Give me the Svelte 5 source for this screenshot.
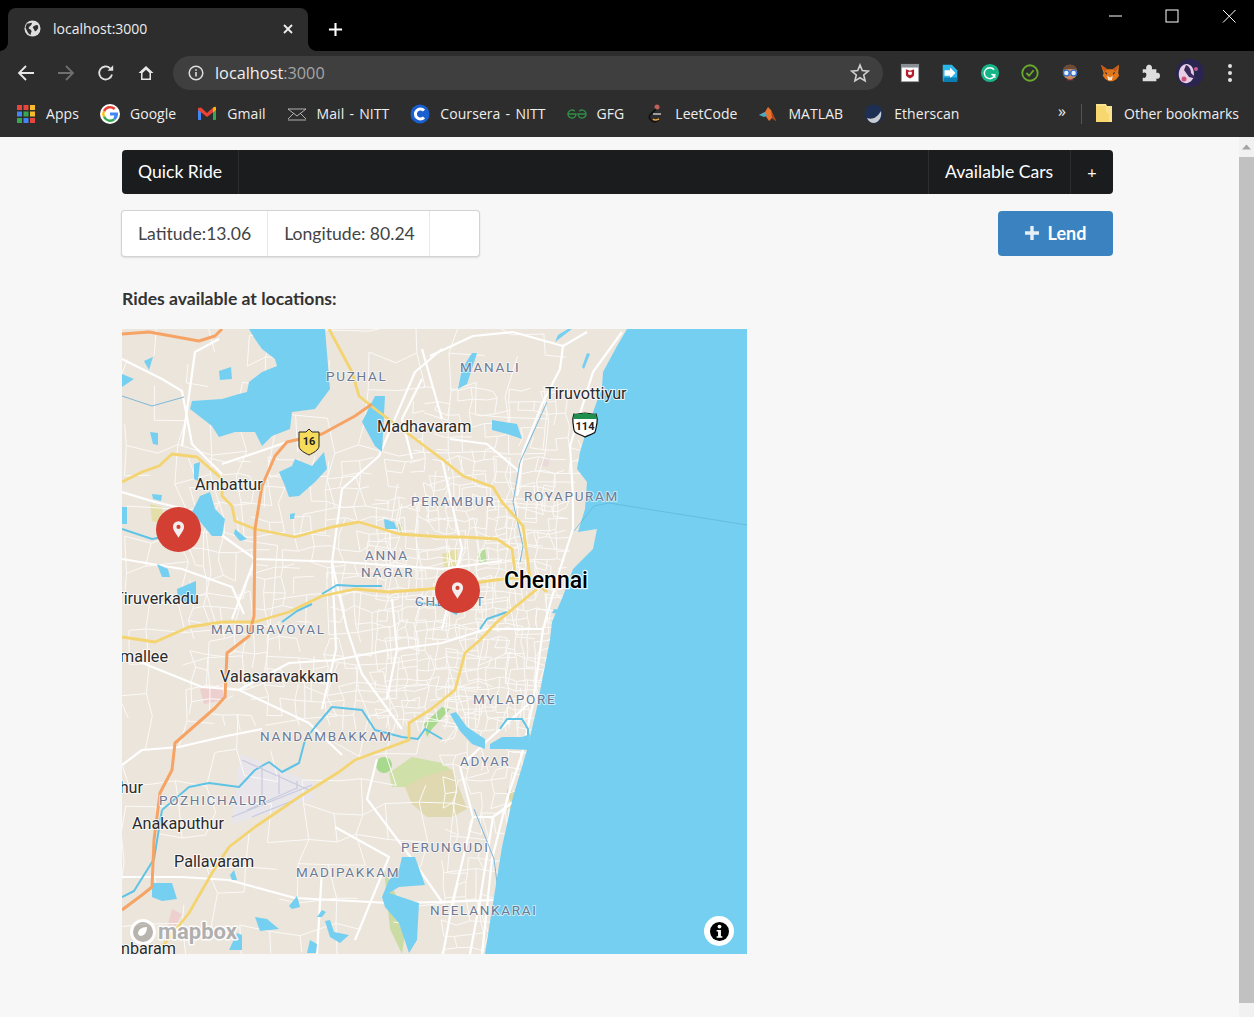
<script>
  const bookmarks = [
    { name: 'Apps', icon: 'apps' },
    { name: 'Google', icon: 'google' },
    { name: 'Gmail', icon: 'gmail' },
    { name: 'Mail - NITT', icon: 'mail' },
    { name: 'Coursera - NITT', icon: 'coursera' },
    { name: 'GFG', icon: 'gfg' },
    { name: 'LeetCode', icon: 'leet' },
    { name: 'MATLAB', icon: 'matlab' },
    { name: 'Etherscan', icon: 'ether' },
  ];

  const appColors = ['#e8453c', '#e8453c', '#f9bb2d', '#4285f4', '#34a853', '#f9bb2d', '#34a853', '#4285f4', '#e8453c'];

  // lakes and the sea, in map pixels
  const water = [
    '505,0 495,17 481,43 480,58 465,100 458,123 455,140 465,153 463,180 456,203 475,200 471,220 451,240 441,267 430,293 428,311 415,378 405,421 391,468 380,518 371,574 363,625 625,625 625,0',
    '127,0 203,0 208,60 193,80 170,83 168,100 150,107 140,117 133,103 113,103 97,108 90,97 68,80 70,72 100,70 117,65 125,63 127,53 140,43 155,37 153,30 140,20 133,10',
    '157,143 170,137 173,130 190,137 202,123 205,140 193,153 177,167 167,168 163,157',
    '78,167 88,163 93,180 103,190 100,207 90,207 70,183',
    '240,93 253,67 263,67 260,123 253,117',
    '0,45 12,50 0,58',
    '22,32 31,28 27,41',
    '97,42 109,38 110,50 98,51',
    '28,103 36,104 36,116 31,115',
    '72,135 78,133 76,152 72,150',
    '30,165 40,166 39,172 31,170',
    '0,178 5,178 5,195 0,195',
    '113,200 125,210 118,212 112,205',
    '35,235 46,240 48,248 40,248',
    '55,260 74,252 74,274 56,272',
    '168,185 173,184 172,190 168,190',
    '262,190 272,193 275,200 263,200',
    '433,13 450,0 446,0 436,6',
    '370,91 395,95 400,110 385,105 370,101',
    '468,25 465,24 460,38 462,40',
    '350,24 355,24 345,55 336,60 340,40',
    '280,528 293,528 303,556 277,558 267,564 297,574 295,611 287,624 277,594 263,578 260,568 267,551 277,541',
    '30,554 50,554 55,570 40,572 30,568',
    '133,588 145,590 157,600 138,602',
    '167,577 175,567 178,578 170,580',
    '195,588 200,581 204,583 200,588',
    '203,592 208,591 212,603 227,606 218,614 208,608',
    '185,624 188,611 195,615 194,624',
    '107,621 115,604 120,606 120,621',
    '108,546 112,541 115,551 110,551',
    '328,385 334,383 345,398 363,410 363,420 350,415 338,402',
    '368,415 380,408 400,408 408,405 407,421 385,420 368,420',
    '440,281 438,285 430,284 432,280',
  ];

  const yellow = [
    '207,0 230,43 237,67 253,80 320,130 341,147 371,158 380,173 401,197 406,233 408,250 425,263',
    '0,153 20,143 37,137 50,125 75,128 100,150 100,167 110,177 113,192 133,200 173,208 210,198 237,193 277,205 320,208 341,208 375,210 390,220 393,243',
    '0,308 33,313 67,298 100,293 133,293 167,283 200,267 233,260 267,263 308,260 381,250 408,248',
    '415,260 375,293 358,311 343,324 333,361 308,381 287,394 287,411 233,431 217,443 177,468 133,498 107,518 90,544 67,584 40,618',
  ];

  const orange = [
    '0,5 27,3 77,12 93,7 100,0',
    '250,75 233,87 200,105 165,113 153,127 140,157 133,200 132,287 127,307 105,324 103,368 93,379 53,414 50,441 38,464 32,511 30,558 20,566 0,581',
  ];

  const white = [
    '13,331 80,358 117,361 187,394 220,426',
    '117,361 167,334 213,331 267,321 320,314 365,300 420,300',
    '0,548 60,548 107,551 173,569 267,574 320,573 400,570',
    '0,436 20,421 57,418 100,408 140,400',
    '213,498 267,528 233,611',
    '411,371 366,411 338,438 351,488 331,571 321,625',
    '371,488 358,571 348,625',
    '320,20 293,43 257,127 220,160 210,233 214,320 200,380',
    '308,27 351,7 391,3 441,17 465,3',
    '441,17 438,40 421,73 401,123 395,167',
    '500,3 471,43 448,117 451,167 451,200 438,240 421,300 411,374 400,425 385,470 370,530 360,625',
    '328,110 365,115 398,143',
    '0,163 33,173 63,180 133,230 220,233 320,240 380,232',
    '133,230 110,290',
    '60,117 73,23 97,10',
    '0,30 40,50 60,62 70,115 100,145',
    '0,230 60,240 110,258 122,285',
    '210,233 225,300 240,345 280,400',
    '320,130 340,220 320,300',
    '165,113 130,125 100,135',
    '320,90 300,20',
    '255,430 245,470 290,530 320,573',
    '265,370 275,320 270,270',
    '200,540 195,625',
    '290,130 280,90 300,50',
    '351,488 371,488 395,470',
  ];

  const rivers = [
    '40,481 67,458 87,454 117,458 133,441 147,433 160,443 177,434 183,411 193,398 210,378 240,381 253,401 280,408 296,410 303,400 320,410',
    '40,481 32,530 12,562 0,568',
    '160,293 175,282 190,275',
    '200,265 215,256 233,257 260,257',
    '293,273 320,277 335,285',
    '358,300 365,290 385,283',
    '378,400 385,390 400,390 406,400 406,410',
    '0,200 30,210 60,205',
  ];

  const canals = [
    '425,73 398,133 391,173 401,217 398,233',
    '0,67 30,77 62,68',
    '384,625 372,530 352,480',
  ];

  const parks = [
    { points: '267,444 290,428 320,434 328,440 325,461 300,461 283,458 270,458', fill: '#cfe0a8' },
    { points: '283,458 300,448 330,440 345,480 330,488 305,488 290,475', fill: '#dfd8b0' },
    { points: '302,395 320,378 328,380 310,400 305,408', fill: '#a9d98f' },
    { points: '78,360 100,355 106,370 82,375', fill: '#eecfcf' },
    { points: '385,460 398,465 395,480 385,480', fill: '#dcd6a9' },
    { points: '320,225 335,220 336,240 322,238', fill: '#e4dfa8' },
    { points: '28,175 40,178 42,195 30,192', fill: '#e4dfa8' },
    { points: '275,195 280,195 280,205 275,203', fill: '#cbdba4' },
    { points: '355,225 363,220 365,232 358,235', fill: '#b5dc9a' },
    { points: '262,540 285,590 280,625 268,600', fill: '#cbdba4' },
    { points: '50,580 60,585 52,600 46,595', fill: '#eecfcf' },
    { points: '420,130 428,128 426,138 418,136', fill: '#eadada' },
  ];

  const labels = [
    { t: 'PUZHAL', x: 204, y: 52, k: 'hood' },
    { t: 'MANALI', x: 338, y: 43, k: 'hood' },
    { t: 'PERAMBUR', x: 289, y: 177, k: 'hood' },
    { t: 'ROYAPURAM', x: 402, y: 172, k: 'hood' },
    { t: 'ANNA', x: 243, y: 231, k: 'hood' },
    { t: 'NAGAR', x: 239, y: 248, k: 'hood' },
    { t: 'CHETPET', x: 293, y: 277, k: 'hood' },
    { t: 'MADURAVOYAL', x: 89, y: 305, k: 'hood' },
    { t: 'MYLAPORE', x: 351, y: 375, k: 'hood' },
    { t: 'NANDAMBAKKAM', x: 138, y: 412, k: 'hood' },
    { t: 'ADYAR', x: 338, y: 437, k: 'hood' },
    { t: 'POZHICHALUR', x: 37, y: 476, k: 'hood' },
    { t: 'PERUNGUDI', x: 279, y: 523, k: 'hood' },
    { t: 'MADIPAKKAM', x: 174, y: 548, k: 'hood' },
    { t: 'NEELANKARAI', x: 308, y: 586, k: 'hood' },
    { t: 'Tiruvottiyur', x: 423, y: 70, k: 'town' },
    { t: 'Madhavaram', x: 255, y: 103, k: 'town' },
    { t: 'Ambattur', x: 73, y: 161, k: 'town' },
    { t: 'Tiruverkadu', x: -8, y: 275, k: 'town' },
    { t: 'Poonamallee', x: 46, y: 333, k: 'town end' },
    { t: 'Valasaravakkam', x: 98, y: 353, k: 'town' },
    { t: 'Kundrathur', x: 21, y: 464, k: 'town end' },
    { t: 'Anakaputhur', x: 10, y: 500, k: 'town' },
    { t: 'Pallavaram', x: 52, y: 538, k: 'town' },
    { t: 'Tambaram', x: 54, y: 625, k: 'town end' },
  ];

  // little streets: a jittered grid, denser near the city centre
  function makeStreets(cell, x0, y0, x1, y1, seed, keep) {
    let s = seed;
    const rnd = () => {
      s = (s * 16807) % 2147483647;
      return s / 2147483647;
    };
    const pts = {};
    const at = (i, j) => {
      const key = i + '_' + j;
      if (!pts[key]) {
        pts[key] = [x0 + i * cell + (rnd() - 0.5) * cell * 0.5, y0 + j * cell + (rnd() - 0.5) * cell * 0.5];
      }
      return pts[key];
    };
    let d = '';
    for (let i = 0; i * cell < x1 - x0; i++) {
      for (let j = 0; j * cell < y1 - y0; j++) {
        const a = at(i, j);
        if (rnd() < keep) {
          const b = at(i + 1, j);
          d += `M${a[0].toFixed(1)} ${a[1].toFixed(1)}L${b[0].toFixed(1)} ${b[1].toFixed(1)}`;
        }
        if (rnd() < keep) {
          const b = at(i, j + 1);
          d += `M${a[0].toFixed(1)} ${a[1].toFixed(1)}L${b[0].toFixed(1)} ${b[1].toFixed(1)}`;
        }
      }
    }
    return d;
  }

  const sparseStreets = makeStreets(30, 0, 0, 440, 625, 4711, 0.55);
  const midStreets = makeStreets(15, 70, 130, 440, 400, 991, 0.6);
  const denseStreets = makeStreets(10, 255, 170, 440, 400, 2027, 0.72);
  const northStreets = makeStreets(12, 290, 60, 465, 180, 313, 0.5);
  const southStreets = makeStreets(13, 320, 360, 410, 625, 77, 0.5);
</script>

<div class="window">
  <header class="chrome">
    <div class="tabstrip">
      <div class="tab">
        <svg class="globe" viewBox="0 0 18 18">
          <circle cx="9" cy="9" r="8.500" fill="#dedede" />
          <path d="M3 4c2 0 3-1 5-1 1 1 0 2-1 3S5 7 5 9c1 1 3 1 3 3 0 1-1 2-1 4-2-1-3-3-4-5L1.500 8zM11 6c2-1 3-1 4 0v3c-1 1-2 3-3 3s-1-2-2-3-1-2 1-3z" fill="#2e2e2e" />
        </svg>
        <span class="tab-title">localhost:3000</span>
        <svg class="tab-close" viewBox="0 0 10 10"><path d="M1 1l8 8M9 1l-8 8" stroke="#eee" stroke-width="1.800" /></svg>
      </div>
      <svg class="new-tab" viewBox="0 0 16 16"><path d="M8 1v14M1 8h14" stroke="#fff" stroke-width="2.200" /></svg>
      <div class="win-controls">
        <svg viewBox="0 0 14 14"><path d="M1 7h13" stroke="#fff" stroke-width="1" /></svg>
        <svg viewBox="0 0 14 14"><rect x="1" y="1" width="12" height="12" fill="none" stroke="#fff" stroke-width="1" /></svg>
        <svg viewBox="0 0 14 14"><path d="M1 1l12.500 12.500M13.500 1L1 13.500" stroke="#fff" stroke-width="1" /></svg>
      </div>
    </div>

    <div class="toolbar">
      <div class="nav-icons">
        <svg viewBox="0 0 18 18"><path d="M17 9H2M9 2L2 9l7 7" fill="none" stroke="#e8e8e8" stroke-width="1.800" /></svg>
        <svg viewBox="0 0 18 18"><path d="M1 9h15M9 2l7 7-7 7" fill="none" stroke="#6f6f6f" stroke-width="1.800" /></svg>
        <svg viewBox="0 0 18 18"><path d="M15 10.500A6.500 6.500 0 1 1 13.200 4.300" fill="none" stroke="#e0e0e0" stroke-width="1.800" /><path d="M10.500 6.800H16.200V1.200z" fill="#e0e0e0" /></svg>
        <svg viewBox="0 0 18 18"><path d="M9 2L1.500 9H4v7h10V9h2.500zM5.500 9l3.500-3.300L12.500 9v5.500h-7z" fill="#e8e8e8" /></svg>
      </div>
      <div class="omnibox">
        <svg class="info" viewBox="0 0 16 16"><circle cx="8" cy="8" r="6.800" fill="none" stroke="#ddd" stroke-width="1.500" /><path d="M8 7v4.500M8 4.200v1.600" stroke="#ddd" stroke-width="1.600" /></svg>
        <span class="url">localhost<span class="port">:3000</span></span>
        <svg class="star" viewBox="0 0 20 20"><path d="M10 2l2.300 5.600 6 .5-4.600 3.900 1.400 5.900L10 14.800 4.900 17.900l1.400-5.900L1.700 8.100l6-.5z" fill="none" stroke="#d0d0d0" stroke-width="1.600" /></svg>
      </div>
      <div class="extensions">
        <svg viewBox="0 0 22 22"><rect x="1" y="1" width="20" height="20" fill="#8a8f94" /><rect x="2" y="5" width="18" height="15" fill="#fff" /><path d="M6.500 7l4.500 1.500L15.500 7v6c0 2-3 3-4.500 4-1.500-1-4.500-2-4.500-4z" fill="#b3202c" /><path d="M9 9.500v3c1 1 3 1 4 0v-3" fill="#fff" /></svg>
        <svg viewBox="0 0 22 22"><path d="M3 2h10l6 6v11c0 1-1 2-2 2H5c-1 0-2-1-2-2z" fill="#29b6e8" /><path d="M5 8h6V5l6 6-6 6v-3H5z" fill="#fff" /><path d="M4 16h15v3c0 1-1 2-2 2H5c-1 0-1-1-1-2z" fill="#0a7fb5" /></svg>
        <svg viewBox="0 0 22 22"><circle cx="11" cy="11" r="10" fill="#15b589" /><path d="M15.500 7.500A6 6 0 1 0 16.500 13l-4-.5" fill="none" stroke="#fff" stroke-width="1.600" /><path d="M14 13l3 3" stroke="#fff" stroke-width="1.600" /></svg>
        <svg viewBox="0 0 22 22"><circle cx="11" cy="11" r="8.500" fill="none" stroke="#6aab2d" stroke-width="2" /><path d="M7 11l3 3 5-6" fill="none" stroke="#6aab2d" stroke-width="2" /></svg>
        <svg viewBox="0 0 22 22"><circle cx="11" cy="10" r="8" fill="#c98a66" /><path d="M3 8c1-5 5-6 8-6s7 1 8 6c-3-2-12-2-16 0z" fill="#6d4a35" /><circle cx="7" cy="11" r="3.200" fill="#e8f1fb" stroke="#2f6fd0" stroke-width="1.500" /><circle cx="15" cy="11" r="3.200" fill="#e8f1fb" stroke="#2f6fd0" stroke-width="1.500" /><path d="M7 19c2-2 6-2 8 0z" fill="#b04a3e" /></svg>
        <svg viewBox="0 0 22 22"><path d="M1 2l7 5h6l7-5-1 9 1 3-3 4-4 2h-4l-4-2-3-4 1-3z" fill="#e2761b" /><path d="M8 14l3 2 3-2-1 5H9z" fill="#f5e6d6" /><path d="M5 10l3 1-1 2zM17 10l-3 1 1 2z" fill="#233447" /><path d="M1 2l7 5-3 3zM21 2l-7 5 3 3z" fill="#c0581a" /></svg>
        <svg viewBox="0 0 22 22"><path d="M3 7h4c-1-3 1-5 3-5s4 2 3 5h5v4c3-1 4 1 4 3s-1 4-4 3v3H3v-4c2 1 4 0 4-3S5 10 3 11z" fill="#dedede" /></svg>
        <svg class="avatar" viewBox="0 0 28 28">
          <circle cx="14" cy="14" r="14" fill="#2a2550" />
          <path d="M5 8c4-5 9-3 11 0s3 9 0 13-8 4-11 1S2 12 5 8z" fill="#e6cfe6" />
          <path d="M10 6c3 1 5 4 5 8l6 6-8-2-5-7z" fill="#3c2a5c" />
          <circle cx="20" cy="10" r="2" fill="#c45a8a" />
          <circle cx="8" cy="20" r="2.500" fill="#d0507a" />
        </svg>
        <svg class="dots" viewBox="0 0 6 20"><circle cx="3" cy="3" r="2" fill="#e0e0e0" /><circle cx="3" cy="10" r="2" fill="#e0e0e0" /><circle cx="3" cy="17" r="2" fill="#e0e0e0" /></svg>
      </div>
    </div>

    <nav class="bookmarks">
      {#each bookmarks as b}
        <div class="bookmark">
          <svg class="fav" viewBox="0 0 20 20">
            {#if b.icon === 'apps'}
              {#each appColors as c, i}
                <rect x={1 + (i % 3) * 6.500} y={1 + Math.floor(i / 3) * 6.500} width="5" height="5" fill={c} />
              {/each}
            {:else if b.icon === 'google'}
              <circle cx="10" cy="10" r="10" fill="#fff" />
              <path d="M10 4.500a5.500 5.500 0 0 1 3.700 1.400l1.900-1.900A8 8 0 0 0 3 6.400l2.200 1.700A5.500 5.500 0 0 1 10 4.500z" fill="#ea4335" />
              <path d="M4.500 10c0-.7.100-1.300.400-1.900L3 6.400a8 8 0 0 0 0 7.200l2.200-1.700c-.4-.6-.7-1.200-.7-1.900z" fill="#fbbc05" />
              <path d="M10 15.500a5.500 5.500 0 0 1-4.800-3.600L3 13.600A8 8 0 0 0 15.300 16l-2-1.600c-.9.700-2 1.100-3.300 1.100z" fill="#34a853" />
              <path d="M18 10c0-.6-.1-1.100-.2-1.600H10v3.100h4.400c-.2 1.100-.8 2.100-1.100 2.900l2 1.600c1.600-1.500 2.700-3.500 2.700-6z" fill="#4285f4" />
            {:else if b.icon === 'gmail'}
              <path d="M1 4h3v12H2c-.6 0-1-.4-1-1z" fill="#4285f4" />
              <path d="M16 4h3v11c0 .6-.4 1-1 1h-2z" fill="#34a853" />
              <path d="M1 4l3-.5L10 9l6-5.500L19 4v2l-9 7-9-7z" fill="#ea4335" />
              <path d="M16 4l1.500-1.200C18 2.500 19 3 19 4v2l-3 2.300z" fill="#fbbc05" />
            {:else if b.icon === 'mail'}
              <path d="M1 5l9 7 9-7M1 15l6-6M19 15l-6-6M1 5h18M1 16h18" fill="none" stroke="#bfbfbf" stroke-width="0.900" />
            {:else if b.icon === 'coursera'}
              <circle cx="10" cy="10" r="9.500" fill="#1a5fcf" />
              <path d="M14 6.500A5 5 0 1 0 14 13.500" fill="none" stroke="#fff" stroke-width="3" />
            {:else if b.icon === 'gfg'}
              <path d="M1 10h8a4 4 0 1 1-1.200-2.800M19 10h-8a4 4 0 1 0 1.200-2.800" fill="none" stroke="#2f8d46" stroke-width="1.400" />
            {:else if b.icon === 'leet'}
              <circle cx="12" cy="3" r="2.500" fill="#c0605a" />
              <path d="M11 5L5 11c-2 3 1 7 5 7l4-2" fill="none" stroke="#111" stroke-width="1.600" />
              <path d="M8 10h8" stroke="#bbb" stroke-width="1.600" />
              <path d="M8 15c2 2 4 1 6 0" fill="none" stroke="#e8a33a" stroke-width="1.600" />
            {:else if b.icon === 'matlab'}
              <path d="M1 11l6-3 3-5 3 3 5 11-4-3-3 3-4-6z" fill="#e8742c" />
              <path d="M1 11l6-3 2 4-3 1z" fill="#49a9c4" />
              <path d="M13 6l5 11-4-3z" fill="#a8421c" />
            {:else if b.icon === 'ether'}
              <circle cx="10" cy="10" r="9.500" fill="#1d2f52" />
              <path d="M3 14c5 2 10 0 14-7 1 5-1 11-7 12-3 0-6-2-7-5z" fill="#c8ccd2" />
            {/if}
          </svg>
          <span>{b.name}</span>
        </div>
      {/each}
      <span class="more">»</span>
      <span class="bm-divider"></span>
      <div class="bookmark other">
        <svg class="fav" viewBox="0 0 20 20"><path d="M2 1h10l1 2h5v16H2z" fill="#fbe28e" /><path d="M2 3h10v6l3 2v8H2z" fill="#f6d86e" /></svg>
        <span>Other bookmarks</span>
      </div>
    </nav>
  </header>

  <div class="viewport">
    <main class="page">
      <div class="topmenu">
        <div class="item brand">Quick Ride</div>
        <div class="menu-right">
          <div class="item cars">Available Cars</div>
          <div class="item plus">+</div>
        </div>
      </div>

      <div class="coords-row">
        <div class="coords">
          <div class="cell">Latitude:13.06</div>
          <div class="cell longitude">Longitude: 80.24</div>
          <div class="cell empty"></div>
        </div>
        <button class="lend">
          <svg viewBox="0 0 14 14"><path d="M7 0v14M0 7h14" stroke="#e6eef6" stroke-width="3.400" /></svg>
          Lend
        </button>
      </div>

      <h4 class="rides-title">Rides available at locations:</h4>

      <div class="map">
        <svg class="map-base" viewBox="0 0 625 625" width="625" height="625">
          <rect width="625" height="625" fill="#ece5dc" />
          {#each parks as p}
            <polygon points={p.points} fill={p.fill} />
          {/each}
          <circle cx="262" cy="436" r="8" fill="#a9d98f" />
          <polygon points="118,425 195,455 190,470 110,495" fill="#e8e6ea" />
          <path d={sparseStreets} class="street" />
          <path d={midStreets} class="street" />
          <path d={denseStreets} class="street" />
          <path d={northStreets} class="street" />
          <path d={southStreets} class="street" />
          {#each white as line}
            <polyline points={line} class="main-road" />
          {/each}
          {#each canals as line}
            <polyline points={line} class="canal" />
          {/each}
          {#each rivers as line}
            <polyline points={line} class="river" />
          {/each}
          {#each water as shape}
            <polygon points={shape} fill="#75cff0" />
          {/each}
          <path d="M487 174l138 22M487 174l-15 3-20 25" fill="none" stroke="#5fb4d8" stroke-width="0.700" />
          <g class="runway">
            <path d="M120 431l67 30M110 488l80-32M140 437v30M157 445v20M175 452v8M125 481l50-22M130 488l40-16" />
          </g>
          {#each yellow as line}
            <polyline points={line} class="trunk" />
          {/each}
          {#each orange as line}
            <polyline points={line} class="motorway" />
          {/each}

          {#each labels as l}
            <text x={l.x} y={l.y} class={l.k}>{l.t}</text>
          {/each}
          <text x="382" y="259" class="city">Chennai</text>

          <g transform="translate(187 112)">
            <path d="M0-12l3 3h7v14c0 4-6 7-10 9-4-2-10-5-10-9V-9h7z" fill="#f7dc5c" stroke="#222" stroke-width="1" />
            <text y="4" class="shield">16</text>
          </g>
          <g transform="translate(463 95)">
            <path d="M-11-10c3 1 8-1 11-1s8 2 11 1c1 3 2 5 1 9s-1 7-2 9-7 3-10 5c-3-2-8-3-10-5s-1-5-2-9 0-6 1-9z" fill="#fff" stroke="#111" stroke-width="1.200" />
            <path d="M-11-10c3 1 8-1 11-1s8 2 11 1l1 5h-24z" fill="#1f8f4e" />
            <text y="6" class="shield small">114</text>
          </g>

          <g class="logo">
            <circle cx="21" cy="603" r="11.500" fill="rgba(90,90,90,.35)" stroke="#fff" stroke-width="3" />
            <path d="M16 605c0-4 3-7 9-7 0 6-3 9-7 9z" fill="#fff" />
            <text x="36" y="610">mapbox</text>
          </g>
        </svg>

        <div class="pin pin-a">
          <svg viewBox="0 0 14 18"><path fill-rule="evenodd" d="M7 0a6 6 0 0 1 6 6c0 4-4 8-6 12C5 14 1 10 1 6a6 6 0 0 1 6-6zm0 4a2.200 2.200 0 1 0 0 4.400A2.200 2.200 0 0 0 7 4z" fill="#f4eeee" /></svg>
        </div>
        <div class="pin pin-b">
          <svg viewBox="0 0 14 18"><path fill-rule="evenodd" d="M7 0a6 6 0 0 1 6 6c0 4-4 8-6 12C5 14 1 10 1 6a6 6 0 0 1 6-6zm0 4a2.200 2.200 0 1 0 0 4.400A2.200 2.200 0 0 0 7 4z" fill="#f4eeee" /></svg>
        </div>

        <div class="attrib">
          <svg viewBox="0 0 20 20"><circle cx="10" cy="10" r="10" fill="#000" /><circle cx="10" cy="4.800" r="2" fill="#fff" /><path d="M7 8.500h4.500v6.500H13v1.500H7V15h1.500v-5H7z" fill="#fff" /></svg>
        </div>
      </div>
    </main>

    <div class="scrollbar">
      <svg class="arrow" viewBox="0 0 15 17"><path d="M7.500 6l4.500 5H3z" fill="#a3a3a3" /></svg>
      <div class="thumb"></div>
    </div>
  </div>
</div>

<style>
  :global(body) {
    margin: 0;
    overflow: hidden;
    background: #f7f7f7;
  }

  .window {
    width: 1254px;
    height: 1017px;
    display: flex;
    flex-direction: column;
    font-family: 'Lato', 'Open Sans', sans-serif;
  }

  .chrome {
    flex: none;
    background: #2d2d2d;
    color: #eee;
    font-family: 'Open Sans', 'Noto Sans', sans-serif;
  }

  .tabstrip {
    height: 51px;
    background: #000;
    display: flex;
    align-items: flex-end;
    padding-left: 8px;
    position: relative;
  }

  .tab {
    width: 300px;
    height: 43px;
    box-sizing: border-box;
    background: #2d2d2d;
    border-radius: 8px 8px 0 0;
    display: flex;
    align-items: center;
    padding: 0 15px 2px 16px;
    gap: 12px;
    position: relative;
  }

  .tab::before,
  .tab::after {
    content: '';
    position: absolute;
    bottom: 0;
    width: 8px;
    height: 8px;
  }

  .tab::before {
    left: -8px;
    background: radial-gradient(circle at 0 0, transparent 7.500px, #2d2d2d 8px);
  }

  .tab::after {
    right: -8px;
    background: radial-gradient(circle at 100% 0, transparent 7.500px, #2d2d2d 8px);
  }

  .globe {
    width: 17px;
    height: 17px;
    flex: none;
  }

  .tab-title {
    flex: 1;
    font-size: 14px;
    color: #eee;
  }

  .tab-close {
    width: 10px;
    height: 10px;
  }

  .new-tab {
    width: 15px;
    height: 15px;
    margin: 0 0 14px 20px;
  }

  .win-controls {
    position: absolute;
    top: 9px;
    right: 18px;
    display: flex;
    gap: 43px;
  }

  .win-controls svg {
    width: 14px;
    height: 14px;
  }

  .toolbar {
    height: 44px;
    display: flex;
    align-items: center;
    padding-left: 17px;
  }

  .nav-icons {
    display: flex;
    gap: 22px;
    width: 156px;
    flex: none;
  }

  .nav-icons svg {
    width: 18px;
    height: 18px;
  }

  .omnibox {
    width: 710px;
    height: 34px;
    box-sizing: border-box;
    background: #3f3f3f;
    border-radius: 17px;
    display: flex;
    align-items: center;
    padding: 0 13px 0 15px;
    flex: none;
  }

  .info {
    width: 16px;
    height: 16px;
    flex: none;
  }

  .url {
    flex: 1;
    margin-left: 11px;
    font-size: 16.300px;
    color: #f0f0f0;
  }

  .port {
    color: #a5a5a5;
  }

  .star {
    width: 20px;
    height: 20px;
  }

  .extensions {
    display: flex;
    align-items: center;
    margin-left: 17px;
    gap: 20px;
  }

  .extensions svg {
    width: 20px;
    height: 20px;
    flex: none;
  }

  .extensions .avatar {
    width: 28px;
    height: 28px;
    margin: 0 -4px;
  }

  .extensions .dots {
    width: 6px;
    height: 20px;
    margin-left: 7px;
  }

  .bookmarks {
    height: 42px;
    box-sizing: border-box;
    display: flex;
    align-items: center;
    padding: 0 0 5px 16px;
    gap: 21px;
    font-size: 14px;
    letter-spacing: 0.060px;
    word-spacing: 1.500px;
    white-space: nowrap;
    position: relative;
  }

  .bookmark {
    display: flex;
    align-items: center;
    gap: 10px;
  }

  .fav {
    width: 20px;
    height: 20px;
    flex: none;
  }

  .more {
    position: absolute;
    left: 1058px;
    top: 5px;
    font-size: 16px;
  }

  .bm-divider {
    position: absolute;
    left: 1081px;
    top: 9px;
    width: 1px;
    height: 20px;
    background: #555;
  }

  .other {
    position: absolute;
    left: 1094px;
    top: 8px;
    gap: 10px;
    letter-spacing: 0;
    word-spacing: 0;
  }

  .viewport {
    flex: 1;
    display: flex;
    min-height: 0;
    background: #f7f7f7;
  }

  .page {
    flex: 1;
    padding: 13px 126px 0 122px;
    color: rgba(0, 0, 0, 0.87);
  }

  .topmenu {
    height: 44px;
    background: #1b1c1d;
    border-radius: 4px;
    display: flex;
    justify-content: space-between;
    color: #fff;
    font-size: 17.600px;
    white-space: nowrap;
  }

  .item {
    display: flex;
    align-items: center;
    padding: 0 16px 2px;
    position: relative;
  }

  .brand {
    width: 117px;
    box-sizing: border-box;
    border-right: 1px solid #2d2e2f;
  }

  .menu-right {
    display: flex;
  }

  .menu-right .item {
    border-left: 1px solid #2d2e2f;
  }

  .cars {
    width: 142px;
    box-sizing: border-box;
  }

  .plus {
    width: 43px;
    box-sizing: border-box;
    justify-content: center;
    padding: 0 0 2px;
    font-size: 16px;
  }

  .coords-row {
    display: flex;
    justify-content: space-between;
    align-items: center;
    margin-top: 16px;
  }

  .coords {
    margin-left: -1px;
    height: 47px;
    box-sizing: border-box;
    display: flex;
    background: #fff;
    border: 1px solid rgba(34, 36, 38, 0.2);
    border-radius: 4px;
    box-shadow: 0 1px 2px rgba(34, 36, 38, 0.12);
    font-size: 17.600px;
    color: #444;
  }

  .cell {
    display: flex;
    align-items: center;
    padding: 0 16px;
    border-right: 1px solid rgba(34, 36, 38, 0.1);
  }

  .longitude {
    padding-right: 14px;
  }

  .cell.empty {
    width: 49px;
    box-sizing: border-box;
    border-right: 0;
  }

  .lend {
    width: 115px;
    height: 45px;
    border: 0;
    border-radius: 4px;
    background: #3b83c0;
    color: #fff;
    font: 700 18px 'Lato', sans-serif;
    display: flex;
    align-items: center;
    justify-content: center;
    gap: 9px;
    padding: 0 0 2px;
  }

  .lend svg {
    width: 14px;
    height: 14px;
  }

  .rides-title {
    margin: 32px 0 20px;
    font-size: 17.600px;
    line-height: 20px;
    font-weight: 700;
    color: #333;
  }

  .map {
    position: relative;
    width: 625px;
    height: 625px;
    overflow: hidden;
  }

  .map-base {
    display: block;
  }

  .street {
    fill: none;
    stroke: #fbfaf8;
    stroke-width: 1;
  }

  .main-road {
    fill: none;
    stroke: #fff;
    stroke-width: 2.200;
    stroke-linejoin: round;
  }

  .river {
    fill: none;
    stroke: #5fc3e6;
    stroke-width: 2;
    stroke-linejoin: round;
  }

  .canal {
    fill: none;
    stroke: #7fb8d8;
    stroke-width: 1;
  }

  .trunk {
    fill: none;
    stroke: #f3d470;
    stroke-width: 2.800;
    stroke-linejoin: round;
  }

  .motorway {
    fill: none;
    stroke: #f5a466;
    stroke-width: 3;
    stroke-linejoin: round;
  }

  .runway path {
    fill: none;
    stroke: #c8cade;
    stroke-width: 1.200;
  }

  text {
    font-family: 'Roboto', 'Noto Sans', sans-serif;
    paint-order: stroke;
    stroke-linejoin: round;
  }

  .hood {
    font-size: 13.500px;
    letter-spacing: 1.700px;
    fill: #6d7a96;
    stroke: rgba(255, 255, 255, 0.6);
    stroke-width: 2px;
  }

  .town {
    font-size: 16.200px;
    fill: #2b2b2b;
    stroke: rgba(255, 255, 255, 0.8);
    stroke-width: 2px;
  }

  .end {
    text-anchor: end;
  }

  .city {
    font-size: 23px;
    font-weight: 500;
    fill: #000;
    stroke: rgba(255, 255, 255, 0.85);
    stroke-width: 2.500px;
  }

  .shield {
    font-size: 11px;
    font-weight: 700;
    text-anchor: middle;
    fill: #222;
  }

  .logo text {
    font-size: 22px;
    font-weight: 700;
    fill: rgba(150, 150, 150, 0.75);
    stroke: rgba(255, 255, 255, 0.9);
    stroke-width: 3px;
  }

  .pin {
    position: absolute;
    width: 45px;
    height: 45px;
    border-radius: 50%;
    background: #d43f33;
    display: flex;
    align-items: center;
    justify-content: center;
  }

  .pin svg {
    width: 13px;
    height: 17px;
  }

  .pin-a {
    left: 34px;
    top: 178px;
  }

  .pin-b {
    left: 313px;
    top: 239px;
  }

  .attrib {
    position: absolute;
    right: 13px;
    bottom: 8px;
    width: 30px;
    height: 30px;
    border-radius: 50%;
    background: #fff;
    display: flex;
    align-items: center;
    justify-content: center;
  }

  .attrib svg {
    width: 19px;
    height: 19px;
  }

  .scrollbar {
    width: 15px;
    flex: none;
    background: #f1f1f1;
    display: flex;
    flex-direction: column;
  }

  .arrow {
    width: 15px;
    height: 20px;
    flex: none;
  }

  .thumb {
    height: 846px;
    background: #c1c1c1;
  }
</style>
